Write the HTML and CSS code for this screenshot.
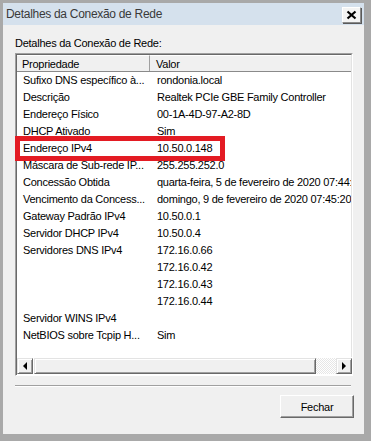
FILE: index.html
```html
<!DOCTYPE html>
<html lang="pt">
<head>
    <meta charset="UTF-8">
    <title>Detalhes da Conexão de Rede</title>
    <link rel="stylesheet" href="styles.css">
</head>
<body>
    <div class="window">
        <div class="titlebar">
            <span class="title">Detalhes da Conexão de Rede</span>
            <div class="close-btn">
                <svg width="11" height="10" viewBox="0 0 11 10">
                    <path d="M1.5 1.5 L9.5 8.5 M9.5 1.5 L1.5 8.5" stroke="#000" stroke-width="2.2" fill="none"/>
                </svg>
            </div>
        </div>

        <div class="client">
            <div class="caption">Detalhes da Conexão de Rede:</div>

            <div class="listview">
                <div class="list-body">
                    <div class="row header">
                        <div class="cell">Propriedade</div>
                        <div class="cell">Valor</div>
                    </div>
                    <div class="row"><div class="cell">Sufixo DNS específico à...</div><div class="cell">rondonia.local</div></div>
                    <div class="row"><div class="cell">Descrição</div><div class="cell">Realtek PCIe GBE Family Controller</div></div>
                    <div class="row"><div class="cell">Endereço Físico</div><div class="cell">00-1A-4D-97-A2-8D</div></div>
                    <div class="row"><div class="cell">DHCP Ativado</div><div class="cell">Sim</div></div>
                    <div class="row"><div class="cell">Endereço IPv4</div><div class="cell">10.50.0.148</div></div>
                    <div class="row"><div class="cell">Máscara de Sub-rede IP...</div><div class="cell">255.255.252.0</div></div>
                    <div class="row"><div class="cell">Concessão Obtida</div><div class="cell">quarta-feira, 5 de fevereiro de 2020 07:44:20</div></div>
                    <div class="row"><div class="cell">Vencimento da Concess...</div><div class="cell">domingo, 9 de fevereiro de 2020 07:45:20</div></div>
                    <div class="row"><div class="cell">Gateway Padrão IPv4</div><div class="cell">10.50.0.1</div></div>
                    <div class="row"><div class="cell">Servidor DHCP IPv4</div><div class="cell">10.50.0.4</div></div>
                    <div class="row"><div class="cell">Servidores DNS IPv4</div><div class="cell">172.16.0.66</div></div>
                    <div class="row"><div class="cell"></div><div class="cell">172.16.0.42</div></div>
                    <div class="row"><div class="cell"></div><div class="cell">172.16.0.43</div></div>
                    <div class="row"><div class="cell"></div><div class="cell">172.16.0.44</div></div>
                    <div class="row"><div class="cell">Servidor WINS IPv4</div><div class="cell"></div></div>
                    <div class="row"><div class="cell">NetBIOS sobre Tcpip H...</div><div class="cell">Sim</div></div>
                </div>

                <div class="hscroll">
                    <div class="sb-btn"><span class="arrow-left"></span></div>
                    <div class="sb-thumb"></div>
                    <div class="sb-track"></div>
                    <div class="sb-btn"><span class="arrow-right"></span></div>
                </div>
            </div>

            <div class="separator"></div>

            <div class="actions">
                <button class="btn">Fechar</button>
            </div>
        </div>

        <!-- highlight drawn over the list -->
        <div class="highlight"></div>
    </div>
</body>
</html>
```

FILE: styles.css
```css
body {
    margin: 0;
    background: #a6a6a6;
    font-family: "Liberation Sans", Arial, sans-serif;
}
.window {
    position: relative;
    width: 371px;
    height: 441px;
    box-sizing: border-box;
    border-style: solid;
    border-color: #a9a9a9;
    border-width: 3px 7px 7px 3px;
    display: flex;
    flex-direction: column;
}
.titlebar {
    height: 22px;
    background: #d5e1ed;
    display: flex;
    align-items: center;
    justify-content: space-between;
    padding-left: 3px;
}
.title {
    font-size: 12px;
    letter-spacing: -0.3px;
    color: #3a3a3a;
}
.close-btn {
    width: 17px;
    height: 14px;
    margin-right: 3px;
    margin-top: 2px;
    background: #f4f4f4;
    border: 1px solid;
    border-color: #ffffff #8a8a8a #8a8a8a #ffffff;
    box-shadow: 1px 1px 0 #5a5a5a;
    display: flex;
    align-items: center;
    justify-content: center;
}
.client {
    flex: 1;
    background: #f0f0f0;
    padding: 12px 10px 0 12px;
    display: flex;
    flex-direction: column;
    font-size: 11px;
    letter-spacing: -0.25px;
}
.caption {
    line-height: 13px;
    margin-bottom: 3px;
    color: #000;
}
.listview {
    height: 323px;
    margin-right: 1px;
    box-sizing: border-box;
    border: 1px solid;
    border-color: #a0a0a0 #ffffff #ffffff #a0a0a0;
    display: flex;
    flex-direction: column;
}
.list-body {
    flex: 1;
    background: #fff;
    border: 1px solid;
    border-color: #696969 #e3e3e3 #e3e3e3 #696969;
    border-bottom: none;
    overflow: hidden;
}
.row {
    display: grid;
    grid-template-columns: 133px 1fr;
    height: 17px;
    line-height: 17px;
    color: #000;
    white-space: nowrap;
}
.cell {
    overflow: hidden;
    padding-left: 6px;
}
.row .cell + .cell {
    padding-left: 7px;
}
.header {
    background: #f0f0f0;
    border-bottom: 1px solid #8a8a8a;
    height: 16px;
    line-height: 16px;
}
.header .cell {
    border-top: 1px solid #fff;
}
.header .cell:first-child {
    border-right: 1px solid #a0a0a0;
    padding-left: 5px;
}
.header .cell + .cell {
    padding-left: 6px;
}
.hscroll {
    height: 17px;
    display: flex;
    background: #fff;
    border-left: 1px solid #696969;
    padding-top: 1px;
}
.sb-btn,
.sb-thumb {
    box-sizing: border-box;
    background: #f0f0f0;
    border: 1px solid;
    border-color: #e3e3e3 #696969 #696969 #e3e3e3;
    box-shadow: inset 1px 1px 0 #fff, inset -1px -1px 0 #a0a0a0;
    height: 16px;
}
.sb-btn {
    width: 16px;
    display: flex;
    align-items: center;
    justify-content: center;
}
.sb-thumb {
    width: 282px;
    margin-left: 1px;
}
.sb-track {
    flex: 1;
    height: 16px;
    background: repeating-conic-gradient(#ffffff 0 25%, #e6e6e6 0 50%) 0 0 / 2px 2px;
}
.arrow-left {
    border-top: 4px solid transparent;
    border-bottom: 4px solid transparent;
    border-right: 4px solid #000;
}
.arrow-right {
    border-top: 4px solid transparent;
    border-bottom: 4px solid transparent;
    border-left: 4px solid #000;
}
.separator {
    margin-top: 9px;
    margin-right: 3px;
    height: 1px;
    background: #a0a0a0;
    border-bottom: 1px solid #fff;
}
.actions {
    display: flex;
    justify-content: flex-end;
    margin-top: 8px;
}
.btn {
    width: 74px;
    height: 23px;
    font-family: "Liberation Sans", Arial, sans-serif;
    font-size: 11px;
    letter-spacing: -0.25px;
    color: #000;
    background: #f0f0f0;
    border: 1px solid;
    border-color: #ffffff #696969 #696969 #ffffff;
    box-shadow: inset -1px -1px 0 #a0a0a0;
    padding: 0;
}
.highlight {
    position: absolute;
    left: 12px;
    top: 133px;
    width: 210px;
    height: 25px;
    box-sizing: border-box;
    border: 5px solid #e31b23;
}
```
